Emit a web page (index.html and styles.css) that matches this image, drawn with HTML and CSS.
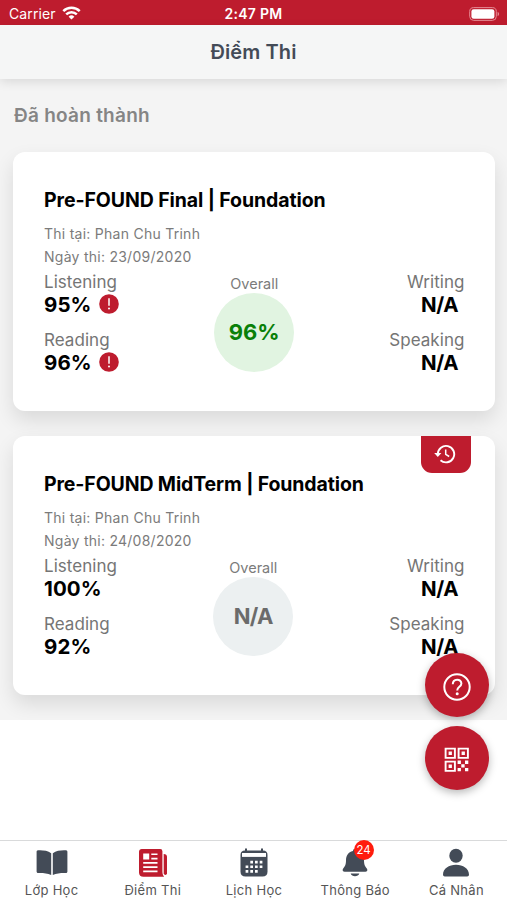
FILE: index.html
```html
<!DOCTYPE html>
<html lang="vi">
<head>
<meta charset="utf-8">
<title>Điểm Thi</title>
<link rel="stylesheet" href="styles.css">
</head>
<body>
<div class="app">
  <div class="status">
    <div class="carrier"><span>Carrier</span>
      <svg width="19" height="14" viewBox="0 0 19 14" fill="none" stroke="#fff" stroke-width="2.5"><path d="M1.3 5.1a11.6 11.6 0 0 1 16.4 0M4.2 8.4a7.5 7.5 0 0 1 10.6 0"/><path d="M9.5 13.6 6.6 10.8a4.1 4.1 0 0 1 5.8 0z" fill="#fff" stroke="none"/></svg>
    </div>
    <span class="time">2:47 PM</span>
    <svg class="battery" width="31" height="14" viewBox="0 0 31 14"><rect x=".7" y=".6" width="26.6" height="12.8" rx="4" fill="none" stroke="#e58b94" stroke-width="1"/><rect x="2.4" y="2.3" width="23" height="9.4" rx="2.3" fill="#fff"/><path d="M28.6 4.8c2 .8 2 3.600 0 4.400z" fill="#e58b94"/></svg>
  </div>
  <header class="header"><h1>Điểm Thi</h1></header>
  <main class="content">
    <h2>Đã hoàn thành</h2>
    <article class="card">
      <h3>Pre-FOUND Final | Foundation</h3>
      <p>Thi tại: Phan Chu Trinh</p>
      <p>Ngày thi: 23/09/2020</p>
      <div class="scores">
        <div class="col">
          <span class="label">Listening</span>
          <div class="value">95%<svg class="alert" width="20" height="20" viewBox="0 0 20 20"><circle cx="10" cy="10" r="9.800" fill="#be1c2e"/><path d="M10 4.200v7.600" stroke="#fff" stroke-width="1.500"/><circle cx="10" cy="14.500" r="1" fill="#fff"/></svg></div>
          <span class="label">Reading</span>
          <div class="value">96%<svg class="alert" width="20" height="20" viewBox="0 0 20 20"><circle cx="10" cy="10" r="9.800" fill="#be1c2e"/><path d="M10 4.200v7.600" stroke="#fff" stroke-width="1.500"/><circle cx="10" cy="14.500" r="1" fill="#fff"/></svg></div>
        </div>
        <div class="overall"><span>Overall</span><div class="circle good">96%</div></div>
        <div class="col right">
          <span class="label">Writing</span><div class="value">N/A</div>
          <span class="label">Speaking</span><div class="value">N/A</div>
        </div>
      </div>
    </article>
    <article class="card">
      <div class="ribbon"><svg width="22" height="20" viewBox="0 0 22 20" fill="none" stroke="#fff" stroke-width="1.900"><path d="M3.800 10.200a8.200 8.200 0 1 1 2.700 6"/><path d="M.2 9h7.200L3.800 13z" fill="#fff" stroke="none"/><path d="M11.700 5.500v4.800l3.500 2.200" stroke-width="1.500"/></svg></div>
      <h3 class="wide">Pre-FOUND MidTerm | Foundation</h3>
      <p>Thi tại: Phan Chu Trinh</p>
      <p>Ngày thi: 24/08/2020</p>
      <div class="scores">
        <div class="col">
          <span class="label">Listening</span><div class="value">100%</div>
          <span class="label">Reading</span><div class="value">92%</div>
        </div>
        <div class="overall pending"><span>Overall</span><div class="circle none">N/A</div></div>
        <div class="col right">
          <span class="label">Writing</span><div class="value">N/A</div>
          <span class="label">Speaking</span><div class="value">N/A</div>
        </div>
      </div>
    </article>
  </main>
  <div class="fabs">
    <div class="fab"><svg width="28" height="28" viewBox="0 0 28 28" fill="none" stroke="#fff"><circle cx="14" cy="14" r="12.700" stroke-width="2"/><path d="M9.800 11.200C9.800 5.200 18.400 5.300 18.400 10.600c0 3.200-4.200 3.300-4.200 6.800" stroke-width="2"/><circle cx="14.200" cy="20.800" r="1.500" fill="#fff" stroke="none"/></svg></div>
    <div class="fab"><svg width="26" height="26" viewBox="0 0 26 26"><g fill="none" stroke="#fff" stroke-width="1.900"><path d="M1.600 1.600h9.300v9.300H1.600zM14.600 1.600h9.300v9.300h-9.300zM1.600 14.600h9.300v9.300H1.600z"/></g><path d="M4.600 4.600h3.300v3.300H4.600zM17.600 4.600h3.300v3.300h-3.300zM4.600 17.600h3.300v3.300H4.600zM13.600 13.600h3.300v3.300h-3.300zM21 13.600h3.300v3.300H21zM17.300 17.300h3.300v3.300h-3.300zM13.600 21h3.300v3.300h-3.300zM21 21h3.300v3.300H21z" fill="#fff"/></svg></div>
  </div>
  <nav class="tabs">
    <div class="tab"><svg width="32" height="30" viewBox="0 0 32 30" fill="#434b57"><path d="M15.200 5.300C11.500 2.300 6.500 2 2 2.200 1 2.200.6 3 .6 3.800v19.600c0 .9.500 1.500 1.500 1.500 4.700-.1 9 .1 13.100 2zM16.800 5.300c3.700-3 8.700-3.300 13.200-3.100 1 0 1.400.8 1.400 1.600v19.600c0 .9-.5 1.500-1.500 1.500-4.700-.1-9 .1-13.100 2z"/></svg><span>Lớp Học</span></div>
    <div class="tab"><svg width="30" height="30" viewBox="0 0 30 30"><path d="M3.800 1h18.400q2.200 0 2.200 2.200v20c0 2.500.5 4 1.700 5.500H5.500C2.600 28.700 1 27.300 1 24.500V3.800C1 2.100 2.100 1 3.800 1z" fill="#be1c2e"/><path d="M25.700 6q3.300.2 3.300 2.800v16.500q-.2 1.700-1.600 1.700t-1.700-1.700z" fill="#be1c2e"/><path d="M5.200 5.400h6v6h-6zM13.300 5.400h6.200v1.700h-6.200zM13.300 9.700h6.200v1.700h-6.200zM5.200 14h14.300v1.700H5.200zM5.200 18.300h14.300V20H5.200zM5.200 22.600h14.300v1.700H5.200z" fill="#fff"/></svg><span>Điểm Thi</span></div>
    <div class="tab"><svg width="30" height="30" viewBox="0 0 30 30"><path d="M6 2.500h18q4.500 0 4.500 4.500v16.500q0 5-5 5h-17q-5 0-5-5V7q0-4.500 4.500-4.500z" fill="#434b57"/><path d="M7 .5v3M23 .5v3" stroke="#434b57" stroke-width="2"/><path d="M3 5h24v3.900H3z" fill="#fff"/><g fill="#fff"><path d="M11.300 12.700h2.700v2.700h-2.700zM16 12.700h2.700v2.700H16zM20.700 12.700h2.700v2.700h-2.700zM6.600 17.400h2.700v2.700H6.600zM11.300 17.400h2.700v2.700h-2.700zM16 17.400h2.700v2.700H16zM20.700 17.400h2.700v2.700h-2.700zM6.600 22.100h2.700v2.700H6.600zM11.300 22.100h2.700v2.700h-2.700zM16 22.100h2.700v2.700H16z"/></g></svg><span>Lịch Học</span></div>
    <div class="tab"><svg width="30" height="30" viewBox="0 0 30 30" fill="#434b57"><path d="M13 3c0-3 4-3 4 0 5 1 7 5 7 9.500 0 4.500 1.300 6 2.800 8 1.300 1.800.3 3.200-1.500 3.200H4.700c-1.800 0-2.800-1.400-1.500-3.200 1.500-2 2.800-3.500 2.800-8C6 8 8 4 13 3zM10.700 25.600h8.600c-.8 3.600-7.800 3.600-8.600 0z"/></svg><b class="badge">24</b><span>Thông Báo</span></div>
    <div class="tab"><svg width="30" height="30" viewBox="0 0 30 30" fill="#434b57"><ellipse cx="15" cy="7.800" rx="6.700" ry="7"/><path d="M2 26.800C2 20.500 8 16.800 15 16.800s13 3.700 13 10q0 1.800-1.800 1.800H3.800Q2 28.600 2 26.800z"/></svg><span>Cá Nhân</span></div>
  </nav>
</div>
</body>
</html>
```
FILE: styles.css
```css
* { box-sizing: border-box; margin: 0; }
body { font-family: Inter, "Liberation Sans", sans-serif; background: #fff; }
svg { display: block; flex: none; }
.app { width: 507px; height: 900px; display: flex; flex-direction: column; position: relative; overflow: hidden; }
.status { height: 25px; background: #be1c2e; color: #fff; display: grid; grid-template-columns: 1fr auto 1fr; align-items: center; padding: 2px 7px 0 9px; font-size: 14px; line-height: 20px; }
.carrier { display: flex; gap: 6px; align-items: center; letter-spacing: .12px; }
.carrier svg { margin-top: -2px; }
.time { font-weight: 600; letter-spacing: .3px; margin-left: -2px; }
.battery { justify-self: end; }
.header { height: 54px; background: #f5f6f6; display: flex; align-items: center; justify-content: center; box-shadow: 0 3px 10px rgba(0,0,0,.11); position: relative; z-index: 1; }
h1 { font-size: 20px; line-height: 28px; font-weight: 600; letter-spacing: .1px; color: #434b57; }
.content { height: 641px; background: #f4f4f4; padding: 24px 12.500px 0 13px; overflow: hidden; }
h2 { font-size: 19px; line-height: 26px; font-weight: 600; letter-spacing: .25px; padding-left: 1px; color: #858585; margin-bottom: 23px; }
.card { height: 259px; background: #fff; border-radius: 12px; padding: 36px 30px 0 31px; margin-bottom: 25px; box-shadow: 0 9px 20px rgba(0,0,0,.11); position: relative; }
h3 { font-size: 19.500px; line-height: 25px; font-weight: 650; letter-spacing: -.1px; color: #000; margin-bottom: 8.500px; white-space: nowrap; }
h3.wide { letter-spacing: -.13px; }
p { font-size: 14px; line-height: 23.500px; color: #7b7b7b; letter-spacing: .26px; }
.scores { display: grid; grid-template-columns: 1fr 80px 1fr; }
.col { display: flex; flex-direction: column; padding-top: 2.500px; }
.label { font-size: 17px; line-height: 22px; letter-spacing: .05px; color: #757575; }
.value { font-size: 20.500px; line-height: 24px; height: 36px; font-weight: 650; letter-spacing: .1px; color: #000; display: flex; gap: 7px; }
.alert { margin-top: 1px; }
.right { align-items: flex-end; }
.right .value { padding-right: 6.500px; letter-spacing: -.5px; }
.overall { display: flex; flex-direction: column; align-items: center; padding-top: 5px; font-size: 14.500px; line-height: 20px; color: #7b7b7b; }
.circle { width: 80px; height: 79px; border-radius: 50%; display: flex; align-items: center; justify-content: center; font-size: 22px; font-weight: 650; padding-bottom: 2px; margin-top: -.5px; }
.pending { position: relative; left: -1px; }
.good { background: #e1f4e1; color: #098009; }
.none { background: #ecf0f1; color: #6b6b6b; letter-spacing: -.8px; }
.ribbon { position: absolute; top: 0; right: 24px; width: 50px; height: 37px; background: #be1c2e; border-radius: 0 0 11px 11px; display: flex; align-items: center; justify-content: center; padding: 0 2px 2px 0; }
.fabs { position: absolute; right: 18px; top: 653px; display: flex; flex-direction: column; gap: 9px; z-index: 2; }
.fab { width: 64px; height: 64px; border-radius: 50%; background: #be1c2e; display: flex; align-items: center; justify-content: center; padding: 3px 1px 0 0; box-shadow: 0 3px 8px rgba(0,0,0,.28); }
.tabs { margin-top: auto; height: 60px; border-top: 1px solid #d9dadb; background: #fff; display: grid; grid-template-columns: repeat(5, 1fr); padding-left: 1px; }
.tab { display: flex; flex-direction: column; align-items: center; padding-top: 7px; font-size: 13px; line-height: 18px; letter-spacing: .3px; color: #555; position: relative; }
.tab span { margin-top: 3px; }
.badge { position: absolute; top: -1px; left: 49px; width: 20px; height: 20px; border-radius: 50%; background: #ff1c0d; color: #fff; font-size: 11.500px; font-weight: 400; line-height: 20px; text-align: center; letter-spacing: 0; }
```
